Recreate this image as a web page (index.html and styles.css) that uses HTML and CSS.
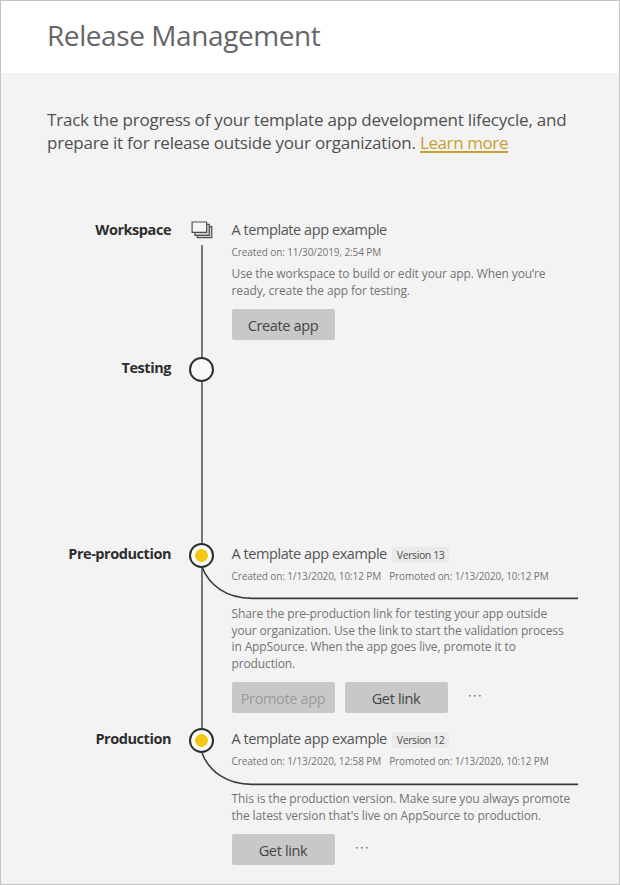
FILE: index.html
```html
<!DOCTYPE html>
<html lang="en">
<head>
<meta charset="utf-8">
<title>Release Management</title>
<link rel="stylesheet" href="styles.css">
</head>
<body>
<div class="page">
  <header class="header"><h1 class="title">Release Management</h1></header>
  <main class="main">
    <p class="intro">Track the progress of your template app development lifecycle, and<br>prepare it for release outside your organization. <a class="learn" href="#">Learn more</a></p>

    <section class="stage stage-workspace">
      <h2 class="label">Workspace</h2>
      <div class="rail">
        <svg class="stack" width="22" height="18" viewBox="0 0 22 18" fill="#d0d0d0" stroke="#505050" stroke-width="1.2">
          <path d="M6.3 5.6H20.8V16.6H6.3z"/>
          <path d="M3.9 3.3H18.3V14.3H3.9z"/>
          <path fill="#f4f4f4" d="M1.1 1H15.6V11.4H1.1z"/>
        </svg>
        <span class="line"></span>
      </div>
      <div class="content">
        <div class="name-row"><span class="name">A template app example</span></div>
        <div class="meta"><span>Created on: 11/30/2019, 2:54 PM</span></div>
        <p class="desc">Use the workspace to build or edit your app. When you’re<br>ready, create the app for testing.</p>
        <div class="actions"><button class="btn">Create app</button></div>
      </div>
    </section>

    <section class="stage stage-testing">
      <h2 class="label">Testing</h2>
      <div class="rail"><span class="node"></span><span class="line"></span></div>
      <div class="content"></div>
    </section>

    <section class="stage stage-pre">
      <h2 class="label">Pre-production</h2>
      <div class="rail"><span class="node node-live"></span><span class="line"></span></div>
      <div class="content">
        <div class="name-row"><span class="name">A template app example</span><span class="badge">Version 13</span></div>
        <div class="meta"><span>Created on: 1/13/2020, 10:12 PM</span><span>Promoted on: 1/13/2020, 10:12 PM</span></div>
        <p class="desc">Share the pre-production link for testing your app outside<br>your organization. Use the link to start the validation process<br>in AppSource. When the app goes live, promote it to<br>production.</p>
        <div class="actions"><button class="btn" disabled>Promote app</button><button class="btn">Get link</button>
          <svg class="more" width="12" height="2" viewBox="0 0 12 2"><path d="M0 0h1.6v1.6H0zM5 0h1.6v1.6H5zM10 0h1.6v1.6H10z"/></svg>
        </div>
      </div>
      <svg class="curve" width="378" height="34" viewBox="0 0 378 34"><path d="M1 1C8 19 25 32.4 51 32.4H377"/></svg>
    </section>

    <section class="stage stage-prod">
      <h2 class="label">Production</h2>
      <div class="rail"><span class="node node-live"></span></div>
      <div class="content">
        <div class="name-row"><span class="name">A template app example</span><span class="badge">Version 12</span></div>
        <div class="meta"><span>Created on: 1/13/2020, 12:58 PM</span><span>Promoted on: 1/13/2020, 10:12 PM</span></div>
        <p class="desc">This is the production version. Make sure you always promote<br>the latest version that's live on AppSource to production.</p>
        <div class="actions"><button class="btn">Get link</button>
          <svg class="more" width="12" height="2" viewBox="0 0 12 2"><path d="M0 0h1.6v1.6H0zM5 0h1.6v1.6H5zM10 0h1.6v1.6H10z"/></svg>
        </div>
      </div>
      <svg class="curve" width="378" height="34" viewBox="0 0 378 34"><path d="M1 1C8 19 25 32.4 51 32.4H377"/></svg>
    </section>
  </main>
</div>
</body>
</html>
```
FILE: styles.css
```css
* { box-sizing: border-box; }
body { margin: 0; font-family: "Open Sans", "Noto Sans", sans-serif; color: #666; }
.page { width: 620px; height: 885px; border: 1px solid #c3c3c3; background: #f3f3f3; overflow: hidden; }
.header { height: 72px; background: #fff; padding: 15px 0 0 46px; }
.title { margin: 0; font-size: 28px; line-height: 38px; font-weight: 400; letter-spacing: -0.42px; color: #666; white-space: nowrap; }
.main { padding-top: 35px; }
.intro { margin: 0 0 62px 46px; font-size: 17px; line-height: 23px; letter-spacing: -0.21px; color: #505050; white-space: nowrap; }
.learn { color: #c8a032; letter-spacing: -0.4px; text-decoration: underline; text-decoration-thickness: 2px; text-underline-offset: 2px; }

.stage { position: relative; display: grid; grid-template-columns: 170px 26px 1fr; column-gap: 17.5px; }
.stage-workspace { height: 141px; }
.stage-testing { height: 185.5px; }
.stage-pre { height: 185.5px; }
.label { margin: -1px 0 0; text-align: right; font-size: 14.5px; line-height: 24px; font-weight: 700; letter-spacing: -0.45px; color: #2d2d2d; white-space: nowrap; }
.stage-workspace .label { margin-top: 2px; }
.rail { display: flex; flex-direction: column; align-items: center; }
.stack { flex: none; margin: 5px 0 6px; }
.line { flex: 1; width: 2px; background: #777; }
.node { flex: none; width: 25px; height: 25px; border: 2.5px solid #2d2d2d; border-radius: 50%; background: #f8f8f8; }
.node-live { background: radial-gradient(circle, #f2c811 6px, #fafafa 6.7px); }
.content { margin: -1.5px 0 0 -0.5px; white-space: nowrap; }
.stage-workspace .content { margin-top: 1px; }
.stage-prod .content { margin-top: -2px; }
.name-row { display: flex; align-items: center; height: 25px; }
.name { font-size: 14.5px; line-height: 25px; letter-spacing: -0.43px; color: #555; }
.badge { margin: 3px 0 0 5px; padding: 0 5px; font-size: 10.5px; line-height: 16px; letter-spacing: -0.4px; background: #eaeaea; color: #505050; }
.meta { display: flex; gap: 8px; height: 18px; padding-top: 1px; font-size: 10px; line-height: 18px; letter-spacing: -0.09px; color: #737373; }
.desc { margin: 6px 0 10px; font-size: 12px; line-height: 16.5px; letter-spacing: -0.12px; color: #737373; }
.stage-pre .desc, .stage-prod .desc { margin-top: 22px; }
.actions { display: flex; align-items: center; gap: 10px; }
.btn { width: 103px; height: 31px; padding: 1px 0 0; border: 0; border-radius: 2px; background: #c8c8c8; color: #444; font: 14.5px "Open Sans", "Noto Sans", sans-serif; letter-spacing: -0.35px; }
.btn:disabled { color: #9b9b9b; }
.more { margin: -3px 0 0 11px; fill: #777; }
.curve { position: absolute; left: 200px; top: 23.5px; fill: none; stroke: #3c3c3c; stroke-width: 1.6; }
```
